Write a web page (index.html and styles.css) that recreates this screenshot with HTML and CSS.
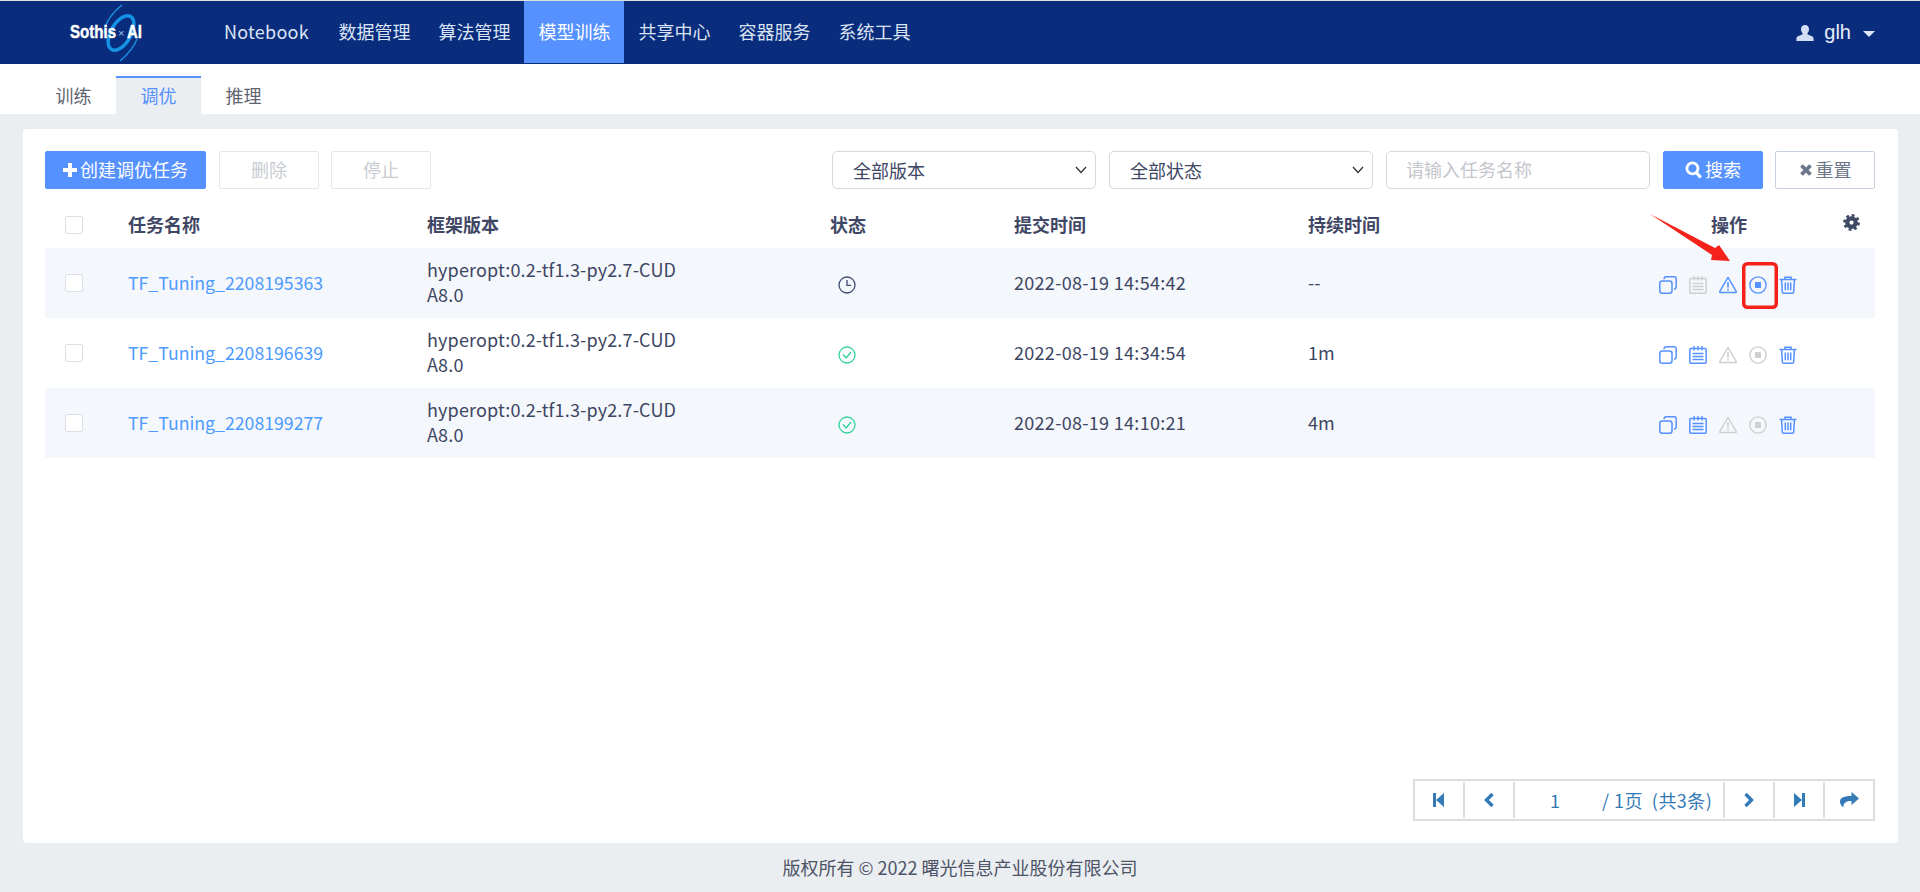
FILE: index.html
```html
<!DOCTYPE html>
<html lang="en">
<head>
    <meta charset="UTF-8">
    <meta name="viewport" content="width=device-width, initial-scale=1.0">
    <title>Sothis AI</title>
    <link rel="stylesheet" href="styles.css">
</head>
<body>

    <!-- Icon sprite -->
    <svg class="sprite" xmlns="http://www.w3.org/2000/svg">
        <symbol id="i-copy" viewBox="0 0 18 18">
            <rect x="0.8" y="5" width="12.2" height="12.2" rx="2.5" fill="none" stroke="currentColor" stroke-width="1.5"/>
            <path d="M5 3.2V3a2.3 2.3 0 0 1 2.3-2.3h8A2 2 0 0 1 17.200 2.700v8a2.300 2.300 0 0 1-2.200 2.300" fill="none" stroke="currentColor" stroke-width="1.5"/>
        </symbol>
        <symbol id="i-plan" viewBox="0 0 18 18">
            <rect x="0.8" y="2.5" width="16.4" height="14.700" rx="1" fill="none" stroke="currentColor" stroke-width="1.5"/>
            <path d="M5 0v4.500M9 0v4.500M13 0v4.500M3.500 7.500h11M3.500 10.500h11M3.500 13.500h11" fill="none" stroke="currentColor" stroke-width="1.4"/>
        </symbol>
        <symbol id="i-warn" viewBox="0 0 18 18">
            <path d="M9 1.400L17.300 15.600a.6.6 0 0 1-.5.9H1.200a.6.6 0 0 1-.5-.9z" fill="none" stroke="currentColor" stroke-width="1.400" stroke-linejoin="round"/>
            <path d="M9 6v5.500M9 12.800v1.600" fill="none" stroke="currentColor" stroke-width="1.600"/>
        </symbol>
        <symbol id="i-stop" viewBox="0 0 18 18">
            <circle cx="9" cy="9" r="8.100" fill="none" stroke="currentColor" stroke-width="1.400"/>
            <rect x="6" y="6" width="6" height="6" rx="0.5" fill="currentColor"/>
        </symbol>
        <symbol id="i-trash" viewBox="0 0 18 18">
            <path d="M0.500 3.600h17M6 3.400V1.200h6v2.200M2.600 3.600l.7 12.200a1.400 1.400 0 0 0 1.400 1.500h8.600a1.400 1.400 0 0 0 1.400-1.500l.7-12.200M6.300 6.500v7.800M9 6.500v7.800M11.700 6.500v7.800" fill="none" stroke="currentColor" stroke-width="1.500"/>
        </symbol>
        <symbol id="i-clock" viewBox="0 0 18 18">
            <circle cx="9" cy="9" r="8" fill="none" stroke="currentColor" stroke-width="1.300"/>
            <path d="M9 4v5.400h4" fill="none" stroke="currentColor" stroke-width="1.300"/>
        </symbol>
        <symbol id="i-ok" viewBox="0 0 18 18">
            <circle cx="9" cy="9" r="8" fill="none" stroke="currentColor" stroke-width="1.300"/>
            <path d="M5 8.600l3.200 3.400L13 6" fill="none" stroke="currentColor" stroke-width="1.400"/>
        </symbol>
    </svg>

    <header class="navbar">
        <div class="logo">
            <svg width="110" height="63" viewBox="0 0 110 63">
                <path d="M72 4C62 12 55 22 54 32" fill="none" stroke="#1a8fe0" stroke-width="1.400"/>
                <path d="M70 60C78 53 84 47 87 38" fill="none" stroke="#1a8fe0" stroke-width="1.400"/>
                <ellipse cx="71" cy="32" rx="10" ry="19" transform="rotate(30 71 32)" fill="none" stroke="#1593e6" stroke-width="3.500"/>
                <text class="logo-text" transform="translate(20 37) scale(.84 1)">Sothis</text>
                <text class="logo-x" x="68" y="36">×</text>
                <text class="logo-text" transform="translate(77 37) scale(.83 1)">AI</text>
            </svg>
        </div>
        <nav class="nav-links">
            <a href="#" class="nav-latin">Notebook</a>
            <a href="#">数据管理</a>
            <a href="#">算法管理</a>
            <a href="#" class="active">模型训练</a>
            <a href="#">共享中心</a>
            <a href="#">容器服务</a>
            <a href="#">系统工具</a>
        </nav>
        <div class="user">
            <svg width="18" height="16" viewBox="0 0 18 16"><path d="M9 0c2.600 0 4 1.800 4 4.200 0 1.800-.8 3.200-1.600 4 0 1 .4 1.400 1.600 1.900 2.400.9 4.600 1.500 4.600 3.400V16H.4v-2.500c0-1.900 2.200-2.500 4.600-3.400 1.200-.5 1.600-.9 1.600-1.900-.8-.8-1.600-2.200-1.600-4C5 1.800 6.400 0 9 0z" fill="#d3def5"/></svg>
            <span>glh</span>
            <i class="caret"></i>
        </div>
    </header>

    <div class="subtabs">
        <a href="#">训练</a>
        <a href="#" class="active">调优</a>
        <a href="#">推理</a>
    </div>

    <main class="content">
        <div class="card">
            <!-- Toolbar -->
            <div class="toolbar">
                <button class="btn btn-primary btn-create">
                    <svg width="14" height="14" viewBox="0 0 14 14"><path d="M7 0v14M0 7h14" stroke="#fff" stroke-width="4"/></svg>创建调优任务
                </button>
                <button class="btn btn-disabled">删除</button>
                <button class="btn btn-disabled">停止</button>
                <div class="spacer"></div>
                <div class="select-wrap">
                    <select><option>全部版本</option></select>
                    <svg class="chevron" width="12" height="8" viewBox="0 0 12 8"><path d="M1 1l5 5.500 5-5.500" fill="none" stroke="#333" stroke-width="1.300"/></svg>
                </div>
                <div class="select-wrap">
                    <select><option>全部状态</option></select>
                    <svg class="chevron" width="12" height="8" viewBox="0 0 12 8"><path d="M1 1l5 5.500 5-5.500" fill="none" stroke="#333" stroke-width="1.300"/></svg>
                </div>
                <input class="search-input" type="text" placeholder="请输入任务名称">
                <button class="btn btn-primary btn-search">
                    <svg width="17" height="18" viewBox="0 0 16 17"><circle cx="7" cy="7" r="5.200" fill="none" stroke="#fff" stroke-width="2.600"/><path d="M10.800 11l4 4.600" stroke="#fff" stroke-width="3"/></svg>搜索
                </button>
                <button class="btn btn-reset">
                    <svg width="14" height="14" viewBox="0 0 14 14"><path d="M2.500 2.500l9 9M11.500 2.500l-9 9" stroke="#6b7688" stroke-width="3.800"/></svg>重置
                </button>
            </div>

            <!-- Task table -->
            <div class="table">
                <div class="row row-head">
                    <div class="cell-check"><input type="checkbox"></div>
                    <div>任务名称</div>
                    <div>框架版本</div>
                    <div>状态</div>
                    <div>提交时间</div>
                    <div>持续时间</div>
                    <div class="cell-ops-head">操作
                        <svg class="gear" width="17" height="17" viewBox="0 0 16 16"><circle cx="8" cy="8" r="4" fill="none" stroke="#3f4a66" stroke-width="4"/><circle cx="8" cy="8" r="6.600" fill="none" stroke="#3f4a66" stroke-width="2.600" stroke-dasharray="2.600 2.580"/></svg>
                    </div>
                </div>

                <div class="row row-odd">
                    <div class="cell-check"><input type="checkbox"></div>
                    <div><a href="#" class="task-link">TF_Tuning_2208195363</a></div>
                    <div class="cell-version">hyperopt:0.2-tf1.3-py2.7-CUDA8.0</div>
                    <div class="cell-status"><svg class="status-icon clock"><use href="#i-clock"/></svg></div>
                    <div class="cell-time">2022-08-19 14:54:42</div>
                    <div>--</div>
                    <div class="cell-ops">
                        <svg class="op"><use href="#i-copy"/></svg>
                        <svg class="op off"><use href="#i-plan"/></svg>
                        <svg class="op"><use href="#i-warn"/></svg>
                        <svg class="op"><use href="#i-stop"/></svg>
                        <svg class="op"><use href="#i-trash"/></svg>
                    </div>
                </div>

                <div class="row">
                    <div class="cell-check"><input type="checkbox"></div>
                    <div><a href="#" class="task-link">TF_Tuning_2208196639</a></div>
                    <div class="cell-version">hyperopt:0.2-tf1.3-py2.7-CUDA8.0</div>
                    <div class="cell-status"><svg class="status-icon done"><use href="#i-ok"/></svg></div>
                    <div class="cell-time">2022-08-19 14:34:54</div>
                    <div>1m</div>
                    <div class="cell-ops">
                        <svg class="op"><use href="#i-copy"/></svg>
                        <svg class="op"><use href="#i-plan"/></svg>
                        <svg class="op off"><use href="#i-warn"/></svg>
                        <svg class="op off"><use href="#i-stop"/></svg>
                        <svg class="op"><use href="#i-trash"/></svg>
                    </div>
                </div>

                <div class="row row-odd">
                    <div class="cell-check"><input type="checkbox"></div>
                    <div><a href="#" class="task-link">TF_Tuning_2208199277</a></div>
                    <div class="cell-version">hyperopt:0.2-tf1.3-py2.7-CUDA8.0</div>
                    <div class="cell-status"><svg class="status-icon done"><use href="#i-ok"/></svg></div>
                    <div class="cell-time">2022-08-19 14:10:21</div>
                    <div>4m</div>
                    <div class="cell-ops">
                        <svg class="op"><use href="#i-copy"/></svg>
                        <svg class="op"><use href="#i-plan"/></svg>
                        <svg class="op off"><use href="#i-warn"/></svg>
                        <svg class="op off"><use href="#i-stop"/></svg>
                        <svg class="op"><use href="#i-trash"/></svg>
                    </div>
                </div>
            </div>

            <!-- Pagination -->
            <div class="pager">
                <a href="#"><svg width="12" height="16" viewBox="0 0 12 16"><path d="M0 1h3v14H0zM3 8l8-7v14z" fill="#337ab7"/></svg></a>
                <a href="#"><svg width="12" height="16" viewBox="0 0 12 16"><path d="M9.500 2L3.500 8l6 6" fill="none" stroke="#337ab7" stroke-width="3.400"/></svg></a>
                <div class="pager-info">
                    <span class="pager-num">1</span>
                    <span class="pager-total">/ 1页&nbsp;&nbsp;(共3条)</span>
                </div>
                <a href="#"><svg width="12" height="16" viewBox="0 0 12 16"><path d="M2.500 2l6 6-6 6" fill="none" stroke="#337ab7" stroke-width="3.400"/></svg></a>
                <a href="#"><svg width="12" height="16" viewBox="0 0 12 16"><path d="M12 1H9v14h3zM9 8L1 1v14z" fill="#337ab7"/></svg></a>
                <a href="#"><svg width="19" height="16" viewBox="0 0 19 16"><path d="M11.500 0L19 6.500l-7.500 6.500V9C6 9 3.500 10.500 3.200 15.500 1 13.500 0 11.500 0 9.500 0 5.500 4.500 4 11.500 4z" fill="#337ab7"/></svg></a>
            </div>
        </div>
    </main>

    <footer class="footer">版权所有 © 2022 曙光信息产业股份有限公司</footer>

    <!-- Red annotation drawn over the screenshot -->
    <svg class="annotation" width="140" height="100" viewBox="0 0 140 100">
        <path d="M0 0L65 34 69 31 80 47 61 46 62 41z" fill="#f5221b"/>
        <rect x="93.750" y="49.750" width="32.500" height="43.500" rx="3.500" fill="none" stroke="#f5221b" stroke-width="3.500"/>
    </svg>

</body>
</html>
```

FILE: styles.css
```css
* {
    box-sizing: border-box;
}
html, body {
    height: 100%;
}
body {
    margin: 0;
    height: 892px;
    display: flex;
    flex-direction: column;
    position: relative;
    overflow: hidden;
    background-color: #ebeef1;
    color: #3d4663;
    font-family: "Noto Sans CJK SC", "Noto Sans", sans-serif;
    font-size: 18px;
}
a {
    text-decoration: none;
}
.sprite {
    width: 0;
    height: 0;
    position: absolute;
}

/* Top navigation */
.navbar {
    height: 64px;
    flex: none;
    display: flex;
    align-items: stretch;
    background-color: #0a2c7c;
    border-top: 1px solid #dfdfdf;
    padding-left: 50px;
    padding-right: 45px;
}
.logo {
    width: 160px;
    display: flex;
    align-items: flex-start;
}
.logo-text {
    font-family: "Liberation Sans", sans-serif;
    font-weight: bold;
    font-size: 18px;
    fill: #fff;
    stroke: #fff;
    stroke-width: 0.4px;
}
.logo-x {
    font-family: "Liberation Sans", sans-serif;
    font-size: 11px;
    fill: #9fc4ea;
}
.nav-links {
    display: flex;
    margin-bottom: 1px;
}
.nav-links a {
    display: flex;
    align-items: center;
    padding: 0 13.500px 2px 14.500px;
    color: #dbe4f5;
}
.nav-links a.nav-latin {
    letter-spacing: 0.25px;
    padding-left: 14px;
    padding-right: 15px;
}
.nav-links a.active {
    background-color: #5591ff;
    color: #fff;
}
.user {
    margin-left: auto;
    display: flex;
    align-items: center;
    gap: 10px;
    color: #e8eefb;
    font-family: "Liberation Sans", sans-serif;
    font-size: 20px;
}
.caret {
    margin-left: 2px;
    margin-top: 2px;
    border-left: 6px solid transparent;
    border-right: 6px solid transparent;
    border-top: 6px solid #dfe7f8;
}

/* Sub tabs */
.subtabs {
    height: 50px;
    flex: none;
    display: flex;
    align-items: flex-end;
    padding-left: 31px;
    background-color: #fff;
}
.subtabs a {
    width: 85px;
    height: 38px;
    display: flex;
    align-items: center;
    justify-content: center;
    padding-bottom: 2px;
    color: #5f6471;
    border-top: 2px solid transparent;
}
.subtabs a.active {
    background-color: #ebeef1;
    color: #5591ff;
    border-top-color: #5591ff;
}

/* Main card */
.content {
    flex: 1;
    display: flex;
    padding: 15px 22px 0 23px;
}
.card {
    flex: 1;
    height: 714px;
    display: flex;
    flex-direction: column;
    padding: 22px 23px 22px 22px;
    background-color: #fff;
    border-radius: 4px;
}

/* Toolbar */
.toolbar {
    display: flex;
    height: 38px;
    flex: none;
}
.btn {
    height: 38px;
    width: 100px;
    display: flex;
    align-items: center;
    justify-content: center;
    gap: 3px;
    padding: 0 0 2px;
    border-radius: 2px;
    font-family: inherit;
    font-size: 18px;
    background-color: #fff;
    border: 1px solid #e4e7ee;
}
.btn svg {
    margin-top: 2px;
}
.btn-primary {
    background-color: #5591ff;
    border-color: #5591ff;
    color: #fff;
}
.btn-create {
    width: 161px;
    margin-right: 13px;
}
.btn-disabled {
    color: #c9ccd2;
    margin-right: 12px;
}
.btn-reset {
    color: #6b7688;
    border-color: #c9d3e0;
}
.spacer {
    flex: 1;
}
.select-wrap {
    position: relative;
    width: 264px;
    margin-right: 13px;
}
.select-wrap select {
    width: 100%;
    height: 38px;
    appearance: none;
    padding: 0 30px 0 20px;
    border: 1px solid #d5d8dc;
    border-radius: 5px;
    background-color: #fff;
    color: #3d4663;
    font-family: inherit;
    font-size: 18px;
}
.chevron {
    position: absolute;
    right: 9px;
    top: 15px;
}
.search-input {
    width: 264px;
    height: 38px;
    margin-right: 13px;
    padding: 0 19px 3px;
    border: 1px solid #d5d8dc;
    border-radius: 5px;
    font-family: inherit;
    font-size: 18px;
}
.search-input::placeholder {
    color: #c4c6cc;
}
.btn-search {
    margin-right: 12px;
}

/* Table */
.table {
    margin-top: 11px;
}
.row {
    display: grid;
    grid-template-columns: 83px 299px 403px 184px 294px 264px 1fr;
    align-items: center;
    height: 70px;
    padding-bottom: 2px;
}
.row-head {
    height: 48px;
    padding-bottom: 0;
    font-weight: bold;
    color: #3f4765;
}
.row-odd {
    background-color: #f4f7fb;
}
.cell-check {
    padding-left: 20px;
    display: flex;
}
.cell-check input {
    appearance: none;
    width: 18px;
    height: 18px;
    margin: 2px 0 0;
    border: 1px solid #dcdfe6;
    border-radius: 2px;
    background-color: #fff;
}
.task-link {
    color: #4e9bff;
    font-size: 17.700px;
}
.cell-version {
    width: 255px;
    line-height: 25px;
    letter-spacing: 0.15px;
    word-break: break-all;
}
.cell-time {
    letter-spacing: 0.3px;
}
.cell-status {
    padding-left: 8px;
    display: flex;
}
.status-icon {
    width: 18px;
    height: 18px;
    margin-top: 6px;
}
.clock {
    color: #3f4a70;
}
.done {
    color: #33d39a;
}
.cell-ops-head {
    position: relative;
    padding-left: 139px;
}
.gear {
    position: absolute;
    right: 15px;
    top: 3px;
}
.cell-ops {
    display: flex;
    gap: 12px;
    padding-left: 87px;
}
.op {
    width: 18px;
    height: 18px;
    margin-top: 6px;
    color: #5591ff;
}
.op.off {
    color: #cfcfcf;
}

/* Pagination */
.pager {
    margin-top: auto;
    margin-left: auto;
    width: 462px;
    height: 42px;
    display: flex;
    align-items: stretch;
    padding: 1px 0;
    border: 2px solid #ddd;
    color: #337ab7;
}
.pager a {
    width: 50px;
    display: flex;
    align-items: center;
    justify-content: center;
    border-left: 2px solid #ddd;
}
.pager a:first-child {
    border-left: none;
    width: 48px;
}
.pager-info {
    width: 210px;
    display: flex;
    align-items: center;
    border-left: 2px solid #ddd;
    white-space: nowrap;
}
.pager-num {
    width: 80px;
    text-align: center;
    margin-right: 7px;
}
.pager-total {
    letter-spacing: 0.45px;
}

/* Footer */
.footer {
    height: 50px;
    flex: none;
    text-align: center;
    line-height: 48px;
    color: #4d5467;
}

/* Annotation */
.annotation {
    position: absolute;
    left: 1650px;
    top: 214px;
}
```
